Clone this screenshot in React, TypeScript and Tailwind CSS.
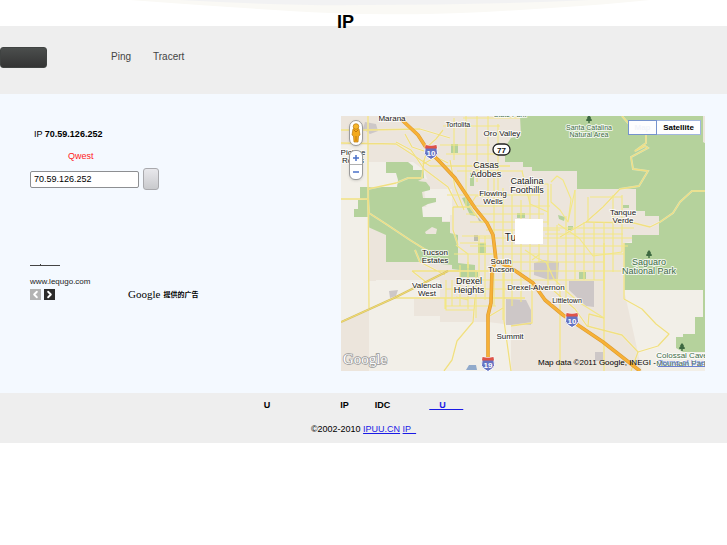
import type { ReactNode } from 'react'
import { ChevronLeft, ChevronRight } from 'lucide-react'

type Place = {
  lines: string[]
  x: number
  y: number
  size: number
  park?: boolean
}

const places: Place[] = [
  { lines: ['Marana'], x: 392, y: 121, size: 8 },
  { lines: ['Tortolita'], x: 458, y: 127, size: 7 },
  { lines: ['Oro Valley'], x: 502, y: 136, size: 8 },
  { lines: ['State Park'], x: 510, y: 117, size: 7, park: true },
  { lines: ['Picture', 'Rocks'], x: 353, y: 155, size: 8 },
  { lines: ['Casas', 'Adobes'], x: 486, y: 168, size: 9 },
  { lines: ['Catalina', 'Foothills'], x: 527, y: 184, size: 9 },
  { lines: ['Flowing', 'Wells'], x: 493, y: 196, size: 8 },
  { lines: ['Tucson'], x: 521, y: 241, size: 10 },
  { lines: ['Tanque', 'Verde'], x: 623, y: 215, size: 8 },
  { lines: ['Santa Catalina', 'Natural Area'], x: 589, y: 130, size: 7, park: true },
  { lines: ['Tucson', 'Estates'], x: 435, y: 255, size: 8 },
  { lines: ['South', 'Tucson'], x: 501, y: 264, size: 8 },
  { lines: ['Valencia', 'West'], x: 427, y: 288, size: 8 },
  { lines: ['Drexel', 'Heights'], x: 469, y: 284, size: 9 },
  { lines: ['Drexel-Alvernon'], x: 536, y: 290, size: 8 },
  { lines: ['Littletown'], x: 567, y: 303, size: 7 },
  { lines: ['Summit'], x: 510, y: 339, size: 8 },
  { lines: ['Saguaro', 'National Park'], x: 649, y: 265, size: 9, park: true },
  { lines: ['Colossal Cave', 'Mountain Park'], x: 682, y: 358, size: 8, park: true },
]

// West side and outlying roads
const outerRoads = [
  'M341 130H368L420 129L450 138M368 116V178L369 308M341 143L396 144L430 166H510',
  'M341 199H368L369 213L386 224L410 240L426 250',
  'M368 189L396 183L408 178L422 178L424 160',
  'M341 322L394 298L448 271H500',
  'M394 298H525M412 271H460M412 271L426 282M415 250L420 262L445 275',
  'M475 298L473 322L457 341L452 360L444 371',
  'M504 270V321L511 371M488 317L503 308',
  'M396 142L411 150L424 169L448 187L458 207M405 134L412 147L430 153',
  'M443 130L436 139L427 147M426 154L423 164L436 157L448 163',
  'M450 160L455 187L464 210M453 207V230L458 245M453 207H470L478 218',
  'M622 116L629 124L646 129L646 143L635 151L645 146L648 148L631 157L633 169L648 171L639 186L620 189L603 207L586 222L560 237',
  'M586 222L634 223L650 227L660 222L673 213L680 202L692 191H705',
  'M624 243V299L642 309L656 324L669 334L658 346L638 352L622 335L587 326L575 309L554 291',
  'M560 290V371M604 243V371M638 352L631 371',
  'M588 326L589 314L604 318M532 283V323L511 326',
]

// City street grid
const gridRoads = [
  'M454 118V160M466 116V207M477 116V182M488 116V200M498 124V205M463 118H520M443 126H500M440 145H490M446 154H500M457 171H523M447 195H540',
  'M494 177V306M503 188V320M512 195V306M521 200V302M530 195V286M539 180V262M548 189V290M557 225V285M566 216V300M575 190V280M584 222V280M594 222V280M604 222V290M613 195V272M622 195V252',
  'M474 206H550M466 214H544M480 222H548M486 230H560M478 238H632M470 246H628M480 254H624M497 262H604M500 271H624M460 280H604M446 289H560M520 228H634M545 234H623',
  'M522 171L530 204L548 212M533 184H548V225M551 184L551 202L560 210L568 222L575 190M551 182L557 176L563 180L571 199L568 222M590 197H622M588 197V222',
  'M460 243H486M454 254H492M446 280V310H474M452 280V306M460 265V306M468 262V309M476 270V318M446 306H496M456 297L468 300M445 298V309',
  'M469 207L476 196H492M470 222L495 222M456 245L468 254V268M462 236H492M479 236V285M485 236V300',
  'M525 250L537 258L546 262L554 279L566 291L580 303L604 318M558 224L579 238L593 256L622 252M532 260L540 254',
]

function Label({ place }: { place: Place }) {
  return (
    <text
      x={place.x}
      y={place.y}
      fontSize={place.size}
      textAnchor="middle"
      fill={place.park ? '#416b47' : '#202020'}
      stroke="#ffffff"
      strokeOpacity={0.75}
      strokeWidth={2}
      strokeLinejoin="round"
      paintOrder="stroke"
    >
      {place.lines.map((line, i) => (
        <tspan key={line} x={place.x} dy={i === 0 ? 0 : place.size}>
          {line}
        </tspan>
      ))}
    </text>
  )
}

function Shield({ x, y, route }: { x: number; y: number; route: string }) {
  return (
    <g transform={`translate(${x} ${y})`}>
      <path
        d="M-5.5-7Q0-5.5 5.5-7L6-3Q8 2 4 5L0 7.5L-4 5Q-8 2-6-3Z"
        fill="#6572c2"
        stroke="#ffffff"
        strokeWidth="1"
      />
      <path d="M-5.5-7Q0-5.5 5.5-7L6-3.5H-6Z" fill="#df5347" />
      <text y="4" fontSize="8" fontWeight="bold" textAnchor="middle" fill="#ffffff">
        {route}
      </text>
    </g>
  )
}

function Tree({ x, y }: { x: number; y: number }) {
  return (
    <path
      transform={`translate(${x} ${y})`}
      d="M0-4L2-1.5L1.5-1L3 1L2.5 2H.7V4H-.7V2H-2.5L-3 1L-1.5-1L-2-1.5Z"
      fill="#3c6840"
    />
  )
}

function TucsonMap() {
  return (
    <svg
      viewBox="341 116 364 255"
      className="block h-auto w-full"
      fontFamily="'Liberation Sans', Arial, sans-serif"
      role="img"
      aria-label="Tucson"
    >
      <rect x="341" y="116" width="364" height="255" fill="#f2efe8" />

      {/* built-up land */}
      <path
        d="M341 116H705V142H703V235H660L624 243V290L642 371H511V325L488 322H440V316H414V298H440V280H376V281H341V199H368V187H397L424 178L446 190L458 207L450 222L442 217H428L436 198H423L430 187L424 170L413 162H368V145H341Z"
        fill="#ece5dc"
      />
      <path d="M341 199H368V281H341ZM424 189H452V215H441L427 211ZM420 207H450V221H423Z" fill="#f2efe8" />
      <path d="M341 321L369 308V371H341Z" fill="#ece5dc" />

      {/* parks */}
      <path
        d="M386 162H408L413 166V170H424V178L418 181L426 182L430 187V190L422 192L423 198H436V202L428 204L422 207L423 217H442V222H450V233L458 235V263L475 265V270L478 272V277H460V270L452 269V265L420 262H386V235L368 227V217H354V209H358V200H368L360 199V187H397L398 180L396 173H386Z"
        fill="#b5d29c"
      />
      <path
        d="M520 116H703V142L705 143V352H683L676 348V337H683V334H695V317H703V290H624V243H632V235H659V216H645V211H636V189H577V171H532V167H523V162H505V147L511 138L521 136Z"
        fill="#b5d29c"
      />
      <path d="M451 144H458V153H451ZM517 213H525V218H517ZM558 215L565 217L564 221L559 219ZM568 226H573V230H568ZM579 272H586V279H579ZM478 243H486V253H478ZM470 173H474V186H470ZM462 198L466 197L476 216L470 215ZM623 205H629V208H623ZM496 268H502V272H496Z" fill="#b5d29c" />
      <path d="M425 232L432 227L437 229L436 234H426Z" fill="#ece5dc" />

      {/* airfields and water */}
      <path d="M534 263L543 260L559 262L558 279L549 280L534 275ZM569 281H594V307L586 306L569 290ZM506 299L526 300L531 310V325H506ZM595 352H603V361H595ZM365 122L376 124L378 131L370 134L363 129ZM389 291L398 290L396 296L390 298Z" fill="#cdc7c7" />
      <path d="M477 216L483 223L479 221ZM474 235H478V241H474Z" fill="#bdbdae" />
      <path d="M466 370L469 365L476 365L477 370Z" fill="#91aacb" />

      <g fill="none" stroke="#fffbe6" strokeWidth="2" opacity="0.5">
        {outerRoads.map((d) => (
          <path key={d} d={d} />
        ))}
      </g>
      <g fill="none" stroke="#f0df82" strokeWidth="1.3" strokeLinejoin="round">
        {outerRoads.map((d) => (
          <path key={d} d={d} />
        ))}
      </g>
      <g fill="none" stroke="#f3e784" strokeWidth="1.1" strokeLinejoin="round">
        {gridRoads.map((d) => (
          <path key={d} d={d} />
        ))}
      </g>
      <path d="M341 322L394 298L448 271" fill="none" stroke="#d5bf68" strokeWidth="2" />
      <path d="M341 322L394 298L448 271" fill="none" stroke="#f0dc72" strokeWidth="1" />

      {/* interstates */}
      <g fill="none" strokeLinejoin="round">
        <path
          d="M402 120L418 135L427 149L440 162L455 178L475 208L487 223L493 235L496 260L514 270L533 283L545 300L563 315L603 342L640 371M496 260L492 270L491 303L488 315V360"
          stroke="#dc9b31"
          strokeWidth="3.6"
        />
        <path
          d="M402 120L418 135L427 149L440 162L455 178L475 208L487 223L493 235L496 260L514 270L533 283L545 300L563 315L603 342L640 371M496 260L492 270L491 303L488 315V360"
          stroke="#f7b137"
          strokeWidth="2.4"
        />
      </g>

      {places.map((place) => (
        <Label key={place.lines.join(' ')} place={place} />
      ))}

      <Tree x={589} y={119} />
      <Tree x={649} y={254} />
      <Tree x={682} y={347} />

      <Shield x={431} y={152} route="10" />
      <Shield x={572} y={320} route="10" />
      <Shield x={488} y={364} route="19" />
      <rect x="493" y="144" width="17" height="11" rx="5.5" fill="#ffffff" stroke="#222222" strokeWidth="1.3" />
      <text x="501.500" y="152.500" fontSize="8" fontWeight="bold" textAnchor="middle" fill="#111111">
        77
      </text>

      <rect x="515" y="219" width="28" height="25" fill="#ffffff" />

      <text
        x="343"
        y="364"
        fontFamily="'Liberation Serif', serif"
        fontSize="15"
        fill="#ffffff"
        stroke="#999999"
        strokeWidth="1.5"
        paintOrder="stroke"
      >
        Google
      </text>
    </svg>
  )
}

function MapButton({ children, active = false }: { children: ReactNode; active?: boolean }) {
  return (
    <button
      type="button"
      className={
        active
          ? 'w-[29px] border border-[#7693ce] bg-[#fdfdfe] text-[#f2f4fa]'
          : 'w-11 border border-l-0 border-[#a3b7df] bg-white text-black'
      }
    >
      {children}
    </button>
  )
}

function MapPanel() {
  return (
    <section className="relative overflow-hidden">
      <TucsonMap />

      <div className="absolute left-2 top-1 flex flex-col items-center gap-1">
        <button
          type="button"
          aria-label="Street View"
          className="flex h-[26px] w-[14px] items-center justify-center rounded-full border border-[#9b9b9b] bg-white shadow-sm"
        >
          <svg viewBox="0 0 10 20" className="h-5 w-[10px]">
            <path d="M2 6Q5 4 8 6L9 12L7.500 13L7 19H3L2.500 13L1 12Z" fill="#f4aa1c" stroke="#b87812" strokeWidth=".7" />
            <circle cx="5" cy="3.500" r="2.800" fill="#f7b62b" stroke="#b87812" strokeWidth=".7" />
            <path d="M3 7L5 9L7 7M5 13V18" fill="none" stroke="#b56c08" strokeWidth=".8" />
          </svg>
        </button>
        <div className="flex w-[14px] flex-col overflow-hidden rounded-md border border-[#9b9b9b] bg-white text-[#4a70c8] shadow-sm">
          <button type="button" aria-label="Zoom in" className="flex h-[14px] items-center justify-center border-b border-[#b0b0b0]">
            <svg viewBox="0 0 8 8" className="size-2">
              <path d="M4 1V7M1 4H7" stroke="currentColor" strokeWidth="1.500" />
            </svg>
          </button>
          <button type="button" aria-label="Zoom out" className="flex h-[14px] items-center justify-center">
            <svg viewBox="0 0 8 8" className="size-2">
              <path d="M1 4H7" stroke="currentColor" strokeWidth="1.500" />
            </svg>
          </button>
        </div>
      </div>

      <div className="absolute right-1 top-1 flex h-[15px] text-[8px] leading-3 font-bold">
        <MapButton active>Map</MapButton>
        <MapButton>Satellite</MapButton>
      </div>

      <p className="absolute right-0 bottom-0.5 text-[8px] leading-3 whitespace-nowrap text-black">
        Map data ©2011 Google, INEGI -{' '}
        <a href="#terms" className="text-[#6b7fd0] underline">
          Terms of Use
        </a>
      </p>
    </section>
  )
}

function Lookup() {
  return (
    <section className="pl-[30px] pt-3 text-[9px] leading-3 text-black">
      <p className="pl-1">
        IP <b>70.59.126.252</b>
      </p>
      <p className="mt-2.5 pl-[38px] text-[#ff1a1a]">Qwest</p>
      <form className="mt-1.5 flex items-center gap-1" onSubmit={(e) => e.preventDefault()}>
        <input
          type="text"
          aria-label="IP"
          defaultValue="70.59.126.252"
          className="h-[17px] w-[109px] rounded-[2px] border border-[#8d8f92] bg-white px-[3px] text-[9px]"
        />
        <button
          type="submit"
          aria-label="IP"
          className="h-[22px] w-4 rounded-[3px] border border-[#a9a9ad] bg-linear-to-b from-[#e8e8ec] to-[#c9cacd]"
        />
      </form>

      <div className="mt-[74px]">
        <a href="#ad" aria-label="www.lequgo.com" className="block h-0.5 w-[30px] border-b border-[#444]">
          <span className="ml-[10px] block h-px w-px bg-[#444]" />
        </a>
        <p className="mt-2.5 text-[8px] text-[#222]">www.lequgo.com</p>
        <div className="flex items-center text-white">
          <button type="button" aria-label="Previous" className="flex size-[11px] items-center justify-center bg-[#b3b3b3]">
            <ChevronLeft className="size-[11px]" strokeWidth={4} />
          </button>
          <button type="button" aria-label="Next" className="ml-[3px] flex size-[11px] items-center justify-center bg-[#2b2b2b]">
            <ChevronRight className="size-[11px]" strokeWidth={4} />
          </button>
          <p className="ml-[73px] flex items-center gap-[3px] text-black">
            <span className="font-['Liberation_Serif',serif] text-[11px]">Google</span>
            <span className="font-['Noto_Sans_CJK_SC',sans-serif] text-[7px] font-bold">提供的广告</span>
          </p>
        </div>
      </div>
    </section>
  )
}

export default function App() {
  return (
    <div className="min-h-screen bg-white font-['Liberation_Sans',Arial,sans-serif]">
      <div className="relative">
        <svg viewBox="0 0 727 16" className="absolute inset-x-0 top-0 w-full" aria-hidden="true">
          <path d="M130 0Q250 9 330 13Q400 16 485 12Q580 7 650 0Z" fill="#faf9f5" />
          <path d="M180 0Q290 6 364 5Q480 5 590 0Z" fill="#f2f2f3" />
        </svg>
        <header className="relative h-[26px] pr-9 pt-3 text-center">
          <h1 className="text-[18px] leading-5 font-bold text-black">IP</h1>
        </header>
      </div>

      <nav className="flex h-[68px] items-start bg-[#eeeeee] pt-[21px] text-[10px] leading-5 text-[#444]">
        <a
          href="#ip"
          aria-label="IP"
          className="h-[21px] w-[47px] rounded-[3px] border border-[#404342] bg-linear-to-b from-[#4b4e4d] to-[#343434]"
        />
        <a href="#ping" className="ml-16">
          Ping
        </a>
        <a href="#tracert" className="ml-[22px]">
          Tracert
        </a>
      </nav>

      <main className="grid grid-cols-[341fr_364fr] bg-[#f4f9ff] py-[22px] pr-[22px]">
        <Lookup />
        <MapPanel />
      </main>

      <footer className="bg-[#eeeeee] py-1.5 text-center text-[9px] leading-3 text-black">
        <div className="flex justify-center font-bold">
          <span>U</span>
          <span className="ml-[70px]">IP</span>
          <span className="ml-[26px]">IDC</span>
          <a href="#u" className="ml-[39px] whitespace-pre text-[#1a1ae6] underline">
            {'\u00a0\u00a0\u00a0\u00a0U\u00a0\u00a0\u00a0\u00a0\u00a0\u00a0\u00a0'}
          </a>
        </div>
        <p className="mt-3 pb-0.5">
          ©2002-2010{' '}
          <a href="#home" className="text-[#1a1ae6] underline">
            IPUU.CN
          </a>{' '}
          <a href="#query" className="text-[#1a1ae6] underline">
            {'IP\u00a0\u00a0'}
          </a>
        </p>
      </footer>
    </div>
  )
}
